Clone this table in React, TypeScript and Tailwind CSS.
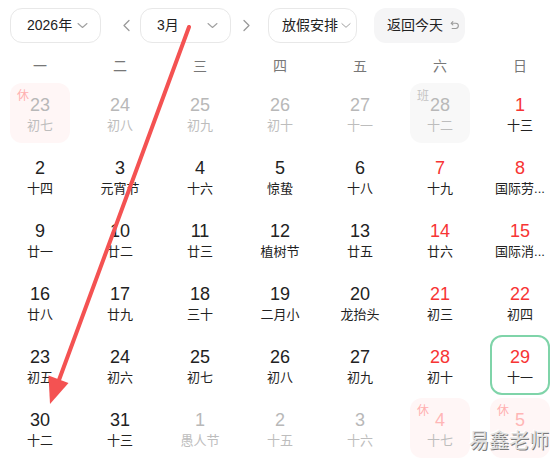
import React from 'react';

type Day = {
  d: number;
  lunar: string;
  muted?: boolean;
  red?: boolean;
  tag?: '休' | '班';
  today?: boolean;
};

const weekdays = ['一', '二', '三', '四', '五', '六', '日'];

const days: Day[] = [
  { d: 23, lunar: '初七', muted: true, tag: '休' },
  { d: 24, lunar: '初八', muted: true },
  { d: 25, lunar: '初九', muted: true },
  { d: 26, lunar: '初十', muted: true },
  { d: 27, lunar: '十一', muted: true },
  { d: 28, lunar: '十二', muted: true, tag: '班' },
  { d: 1, lunar: '十三', red: true },

  { d: 2, lunar: '十四' },
  { d: 3, lunar: '元宵节' },
  { d: 4, lunar: '十六' },
  { d: 5, lunar: '惊蛰' },
  { d: 6, lunar: '十八' },
  { d: 7, lunar: '十九', red: true },
  { d: 8, lunar: '国际劳...', red: true },

  { d: 9, lunar: '廿一' },
  { d: 10, lunar: '廿二' },
  { d: 11, lunar: '廿三' },
  { d: 12, lunar: '植树节' },
  { d: 13, lunar: '廿五' },
  { d: 14, lunar: '廿六', red: true },
  { d: 15, lunar: '国际消...', red: true },

  { d: 16, lunar: '廿八' },
  { d: 17, lunar: '廿九' },
  { d: 18, lunar: '三十' },
  { d: 19, lunar: '二月小' },
  { d: 20, lunar: '龙抬头' },
  { d: 21, lunar: '初三', red: true },
  { d: 22, lunar: '初四', red: true },

  { d: 23, lunar: '初五' },
  { d: 24, lunar: '初六' },
  { d: 25, lunar: '初七' },
  { d: 26, lunar: '初八' },
  { d: 27, lunar: '初九' },
  { d: 28, lunar: '初十', red: true },
  { d: 29, lunar: '十一', red: true, today: true },

  { d: 30, lunar: '十二' },
  { d: 31, lunar: '十三' },
  { d: 1, lunar: '愚人节', muted: true },
  { d: 2, lunar: '十五', muted: true },
  { d: 3, lunar: '十六', muted: true },
  { d: 4, lunar: '十七', muted: true, red: true, tag: '休' },
  // lunar text of this one sits under the watermark
  { d: 5, lunar: '', muted: true, red: true, tag: '休' },
];

function DayCell({ day }: { day: Day }) {
  let bg = '';
  if (day.tag === '休') bg = 'bg-[#fff6f6]';
  if (day.tag === '班') bg = 'bg-[#f8f8f8]';

  let numColor = 'text-[#222]';
  if (day.red) numColor = day.muted ? 'text-[#ffb6b6]' : 'text-[#f73434]';
  else if (day.muted) numColor = 'text-[#b8b8b8]';

  const lunarColor = day.muted ? 'text-[#bdbdbd]' : 'text-[#222]';

  return (
    <div className="flex justify-center">
      <div
        className={`relative w-[60px] h-[60px] rounded-xl flex flex-col items-center ${bg} ${
          day.today ? 'border-2 border-[#7fd4a9] pt-[9px]' : 'pt-[11px]'
        }`}
      >
        {day.tag && (
          <span
            className={`absolute left-[7px] top-[6px] text-[12px] leading-[14px] ${
              day.tag === '休' ? 'text-[#ffb0b0]' : 'text-[#c4c4c4]'
            }`}
          >
            {day.tag}
          </span>
        )}
        <div className={`text-[18px] leading-[22px] ${numColor}`}>{day.d}</div>
        <div className={`mt-[1px] h-[18px] text-[13px] leading-[18px] whitespace-nowrap ${lunarColor}`}>
          {day.lunar}
        </div>
      </div>
    </div>
  );
}

function Caret({ w = 11 }: { w?: number }) {
  return (
    <svg width={w} height="7" viewBox="0 0 11 7" fill="none" stroke="#a0a0a0" strokeWidth="1.1" strokeLinecap="round" strokeLinejoin="round">
      <path d="M1 1.5 L5.5 5.5 L10 1.5" />
    </svg>
  );
}

function Arrow({ dir }: { dir: 'left' | 'right' }) {
  return (
    <svg width="9" height="13" viewBox="0 0 9 13" fill="none" stroke="#9a9a9a" strokeWidth="1.3" strokeLinecap="round" strokeLinejoin="round">
      <path d={dir === 'left' ? 'M7 1.5 L2 6.5 L7 11.5' : 'M2 1.5 L7 6.5 L2 11.5'} />
    </svg>
  );
}

function UndoIcon() {
  return (
    <svg width="11" height="11" viewBox="0 0 12 12" fill="none" stroke="#9a9a9a" strokeWidth="1.2" strokeLinecap="round" strokeLinejoin="round">
      <path d="M4.2 1.8 L2.4 3.6 L4.2 5.4" />
      <path d="M2.6 3.6 H7.4 A2.8 2.8 0 0 1 7.4 9.2 H3.4" />
    </svg>
  );
}

export default function App() {
  return (
    <div
      className="relative w-[557px] h-[463px] overflow-hidden bg-white"
      style={{ fontFamily: '"Liberation Sans", "Noto Sans CJK SC", sans-serif' }}
    >
      {/* Toolbar */}
      <div className="flex items-center h-[35px] mt-[8px] pl-[10px]">
        <button className="flex items-center h-[35px] w-[91px] pl-[16px] pr-[12px] justify-between border border-[#e8e8e8] rounded-xl text-[14px] text-[#222]">
          <span>2026年</span>
          <Caret />
        </button>
        <div className="ml-[21px]">
          <Arrow dir="left" />
        </div>
        <button className="ml-[9px] flex items-center h-[35px] w-[91px] pl-[16px] pr-[12px] justify-between border border-[#e8e8e8] rounded-xl text-[14px] text-[#222]">
          <span>3月</span>
          <Caret />
        </button>
        <div className="ml-[11px]">
          <Arrow dir="right" />
        </div>
        <button className="ml-[17px] flex items-center h-[35px] w-[89px] pl-[13px] gap-[3px] border border-[#e8e8e8] rounded-xl text-[14px] text-[#222]">
          <span>放假安排</span>
          <Caret w={10} />
        </button>
        <button className="ml-[17px] flex items-center h-[35px] w-[91px] pl-[13px] gap-[6px] bg-[#f5f5f6] rounded-xl text-[14px] text-[#222]">
          <span>返回今天</span>
          <UndoIcon />
        </button>
      </div>

      {/* Weekdays */}
      <div className="grid grid-cols-[repeat(7,80px)] mt-[11px] h-[24px] items-center">
        {weekdays.map((w) => (
          <div key={w} className="text-center text-[14px] text-[#777]">
            {w}
          </div>
        ))}
      </div>

      {/* Days */}
      <div className="grid grid-cols-[repeat(7,80px)] gap-y-[3px] mt-[5px]">
        {days.map((day, i) => (
          <DayCell key={i} day={day} />
        ))}
      </div>

      {/* Annotation arrow */}
      <svg className="absolute left-0 top-0 pointer-events-none" width="557" height="463">
        <line x1="189" y1="27" x2="59" y2="380" stroke="#f45252" strokeWidth="4" strokeLinecap="round" />
        <polygon points="50,404 48.5,375.5 68.5,383" fill="#f45252" />
      </svg>

      {/* Watermark */}
      <div className="absolute right-[8px] bottom-[9px] text-[20px] leading-[26px] text-[#e2e2e2] [text-shadow:1px_1px_0_#7a7a7a,-1px_-1px_0_#ffffff]">
        易鑫老师
      </div>
    </div>
  );
}
